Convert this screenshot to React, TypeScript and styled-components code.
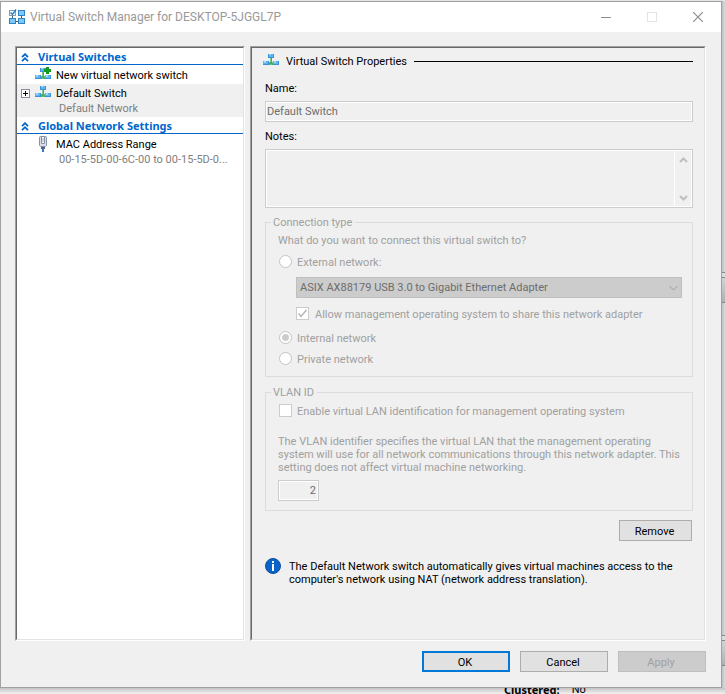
import React from "react";
import styled, { createGlobalStyle } from "styled-components";

const GlobalStyle = createGlobalStyle`
  * { box-sizing: border-box; }
  body {
    margin: 0;
    background: #f4f4f4;
    font-family: Roboto, "Noto Sans", sans-serif;
    font-size: 11px;
    line-height: 14px;
    color: #000;
  }
  button, input, select, textarea {
    font: inherit;
    margin: 0;
    border-radius: 0;
  }
`;

const Desktop = styled.div`
  display: grid;
  grid-template-columns: minmax(0, 1fr) 3px;
  grid-template-rows: minmax(0, 1fr) 6px;
  min-height: 100vh;
  padding-top: 1px;
  background: #e4e4e4;
`;

const Window = styled.main`
  display: flex;
  flex-direction: column;
  background: #f0f0f0;
  border: 1px solid #a0a0a0;
`;

const SideStrip = styled.div`
  display: flex;
  flex-direction: column;
  background: linear-gradient(to right, #bebebe, #dcdcdc);
`;

const Spacer = styled.div<{ $size?: number }>`
  flex: ${(p) => (p.$size === undefined ? "1" : `0 0 ${p.$size}px`)};
`;

const StripBar = styled.div`
  flex: 0 0 31px;
  border: 1px solid #85858c;
  border-width: 1px 0;
  background: linear-gradient(#dcdcdc 4px, #85858c 4px, #85858c 5px, #d2d2d2 5px, #b0b0b0);
`;

const BottomStrip = styled.div`
  grid-column: 1 / -1;
  display: flex;
  align-items: flex-end;
  gap: 12px;
  height: 6px;
  padding-left: 504px;
  overflow: hidden;
  line-height: 8px;
  background: linear-gradient(#c4c4c4, #f2f2f2);
`;

const StripName = styled.b`
  font-family: "Noto Sans", sans-serif;
`;

const TitleBar = styled.header`
  display: flex;
  align-items: center;
  height: 30px;
  padding-left: 8px;
  background: #fff;
  color: #999;
`;

const Title = styled.h1`
  flex: 1;
  margin: 0 0 0 5px;
  font-size: 12px;
  line-height: 16px;
  font-weight: 400;
  white-space: nowrap;
`;

const CaptionButton = styled.button`
  display: flex;
  align-items: center;
  justify-content: center;
  width: 46px;
  height: 30px;
  padding: 0;
  border: 0;
  background: none;
  color: #8c8c8c;
  &:disabled { color: #e4e4e4; }
`;

const Body = styled.div`
  flex: 1;
  display: grid;
  grid-template-columns: minmax(0, 230fr) minmax(0, 456fr);
  gap: 5px;
  padding: 14px 15px 10px 14px;
`;

const Sunken = styled.div`
  border: 1px solid;
  border-color: #a0a0a0 #fff #fff #a0a0a0;
  display: flex;
  min-width: 0;
`;

const SunkenInner = styled.div<{ $white?: boolean }>`
  flex: 1;
  min-width: 0;
  border: 1px solid;
  border-color: #696969 #e3e3e3 #e3e3e3 #696969;
  background: ${(p) => (p.$white ? "#fff" : "#f0f0f0")};
  padding: ${(p) => (p.$white ? "0" : "5px 11px 16px 13px")};
`;

const SectionHead = styled.h2`
  display: flex;
  align-items: center;
  gap: 9px;
  height: 17px;
  margin: 0 0 1px;
  padding: 2px 0 0 4px;
  border-bottom: 1px solid #0066cc;
  color: #0066cc;
  font-family: "Noto Sans", sans-serif;
  font-size: 11px;
  font-weight: 700;
`;

const TreeItem = styled.button<{ $selected?: boolean }>`
  display: grid;
  grid-template-columns: 16px 16px minmax(0, 1fr);
  column-gap: 2px;
  align-items: center;
  width: 100%;
  padding: 1px 4px 1px 0;
  border: 0;
  text-align: left;
  background: ${(p) => (p.$selected ? "#f0f0f0" : "none")};
`;

const Slot = styled.span`
  display: flex;
  justify-content: center;
  height: 16px;
  align-items: center;
`;

const ItemText = styled.span`
  padding: 2px 0 0 3px;
  white-space: nowrap;
`;

const ItemNote = styled.span`
  grid-column: 3;
  height: 15px;
  padding: 1px 0 0 6px;
  color: #808080;
  white-space: nowrap;
  overflow: hidden;
`;

const PanelHead = styled.div`
  display: flex;
  align-items: center;
  gap: 7px;
  height: 16px;
  margin: 0 0 12px -2px;
`;

const PanelTitle = styled.h2`
  margin: 0;
  padding-top: 2px;
  font-size: 11px;
  font-weight: 400;
`;

const Rule = styled.span`
  flex: 1;
  height: 1px;
  background: #000;
`;

const FieldLabel = styled.label`
  display: block;
  line-height: 16px;
  margin-bottom: 4px;
`;

const TextBox = styled.input`
  display: block;
  width: 100%;
  height: 21px;
  padding: 0 1px;
  border: 1px solid #ccc;
  box-shadow: inset 0 0 0 1px #fff;
  background: #f0f0f0;
  color: #6d6d6d;
  margin-bottom: 7px;
`;

const NumberBox = styled(TextBox)`
  width: 41px;
  padding-right: 2px;
  text-align: right;
  margin: 6px 0 0;
`;

const NotesFrame = styled.div`
  display: flex;
  height: 59px;
  border: 1px solid #ccc;
  padding: 1px;
  background: #fff;
  margin-bottom: 6px;
`;

const NotesArea = styled.textarea`
  flex: 1;
  min-width: 0;
  resize: none;
  border: 0;
  background: #f0f0f0;
`;

const ScrollTrack = styled.div`
  display: flex;
  flex-direction: column;
  justify-content: space-between;
  width: 16px;
  margin-left: 1px;
  background: #f0f0f0;
`;

const ScrollButton = styled.button`
  display: flex;
  align-items: center;
  justify-content: center;
  height: 17px;
  padding: 0;
  border: 0;
  background: none;
`;

const Group = styled.fieldset`
  margin: 0 0 7px;
  padding: 3px 10px 10px 12px;
  border: 1px solid #dcdcdc;
  min-width: 0;
  color: #a0a0a0;
`;

const VlanGroup = styled(Group)`
  margin-bottom: 9px;
  padding-top: 4px;
  padding-bottom: 9px;
`;

const GroupTitle = styled.legend`
  margin-left: -7px;
  padding: 2px 3px 0 2px;
`;

const Question = styled.p`
  margin: 0 0 6px;
  line-height: 16px;
`;

const Paragraph = styled.p`
  margin: 0;
  line-height: 13px;
`;

const Choice = styled.label<{ $gap: number; $indent?: boolean }>`
  display: flex;
  align-items: flex-start;
  gap: ${(p) => (p.$indent ? 6 : 5)}px;
  height: 14px;
  line-height: 16px;
  margin: 0 0 ${(p) => p.$gap}px ${(p) => (p.$indent ? 18 : 1)}px;
  white-space: nowrap;
`;

const Radio = styled.input.attrs({ type: "radio" })`
  appearance: none;
  flex: none;
  width: 13px;
  height: 13px;
  border: 1px solid #c4c4c4;
  border-radius: 50%;
  background: #fff;
  &:checked { background: radial-gradient(circle, #ccc 3px, #fff 4px); }
`;

const TickFrame = styled.span`
  display: grid;
  width: 13px;
  height: 13px;
  & > * { grid-area: 1 / 1; }
`;

const Tick = styled.input.attrs({ type: "checkbox" })`
  appearance: none;
  width: 13px;
  height: 13px;
  border: 1px solid #ccc;
  background: #fff;
`;

const SelectFrame = styled.div`
  display: grid;
  align-items: center;
  margin: 0 0 9px 18px;
  & > * { grid-area: 1 / 1; }
  & > svg { justify-self: end; margin-right: 4px; pointer-events: none; }
`;

const Select = styled.select`
  appearance: none;
  width: 100%;
  height: 21px;
  padding: 1px 20px 0 3px;
  border: 1px solid #bfbfbf;
  background: #ccc;
  color: #6d6d6d;
  opacity: 1;
`;

const Actions = styled.div`
  display: flex;
  justify-content: flex-end;
  padding-right: 1px;
`;

const PushButton = styled.button<{ $width: number; $primary?: boolean }>`
  width: ${(p) => p.$width}px;
  height: 21px;
  padding: 2px 2px 0 0;
  border: ${(p) => (p.$primary ? "2px solid #0078d7" : "1px solid #adadad")};
  background: #e1e1e1;
  color: #000;
  &:disabled { background: #ccc; border-color: #bfbfbf; color: #a0a0a0; }
`;

const InfoRow = styled.div`
  display: flex;
  gap: 8px;
  margin-top: 17px;
  & > svg { flex: none; }
`;

const InfoText = styled.p`
  margin: 2px 0 0;
  line-height: 13px;
`;

const Footer = styled.footer`
  display: flex;
  justify-content: flex-end;
  gap: 10px;
  padding: 0 15px 15px;
`;

function SwitchIcon({ plus }: { plus?: boolean }) {
  return (
    <svg width="16" height="16" viewBox="0 0 16 16" aria-hidden="true">
      <path d="M7 5h2v4l2 1v2H9l-1-.6-1 .6H5v-2l2-1z" fill="#45b058" />
      <path d="M7 5h1v4H7z" fill="#7cc884" />
      <rect x="5" y="1" width="6" height="4" fill="#3a92da" />
      <rect x="6" y="1" width="4" height="3" fill="#5fb4ee" />
      <rect x="6" y="1" width="2" height="1" fill="#9ad8fb" />
      <rect x="0" y="8" width="6" height="4" fill="#3a92da" />
      <rect x="0" y="8" width="5" height="3" fill="#5fb4ee" />
      <rect x="1" y="8" width="2" height="2" fill="#9ad8fb" />
      <rect x="10" y="8" width="6" height="4" fill="#3a92da" />
      <rect x="10" y="8" width="5" height="3" fill="#5fb4ee" />
      <rect x="11" y="8" width="2" height="2" fill="#9ad8fb" />
      {plus && <path d="M11 0h3v2h2v3h-2v2h-3V5H9V2h2z" fill="#119a1b" />}
    </svg>
  );
}

function AppIcon() {
  return (
    <svg width="16" height="16" viewBox="0 0 16 16" aria-hidden="true">
      <path d="M3.500 7v2M12.500 7v2M7 12.500h2" stroke="#4a5a68" />
      <rect x="0.500" y="1.500" width="6" height="5" fill="#fff" stroke="#8a9aa8" />
      <path d="M1.500 3.500l2 2L7 .5" fill="none" stroke="#1e7fcb" strokeWidth="1.400" />
      <rect x="9.500" y="1.500" width="6" height="5" fill="#7cc8f6" stroke="#2f82c4" />
      <rect x="0.500" y="9.500" width="6" height="5" fill="#7cc8f6" stroke="#2f82c4" />
      <rect x="9.500" y="9.500" width="6" height="5" fill="#7cc8f6" stroke="#2f82c4" />
    </svg>
  );
}

function PlugIcon() {
  return (
    <svg width="16" height="16" viewBox="0 0 16 16" aria-hidden="true">
      <path d="M4.500 1.500q0-1 1-1h5q1 0 1 1v8l-1 1h-5l-1-1z" fill="#d9dee8" stroke="#8791a5" />
      <path d="M6.500 1v6.500h3V1" fill="#f7f8fb" stroke="#8791a5" />
      <path d="M8 2v4" stroke="#aab2c2" />
      <rect x="6" y="11" width="4" height="2" fill="#4c5f86" />
      <rect x="7" y="13" width="2" height="3" fill="#3978b8" />
    </svg>
  );
}

function DoubleChevron() {
  return (
    <svg width="8" height="9" viewBox="0 0 8 9" aria-hidden="true">
      <path d="M1 4.200l3-3 3 3M1 8.200l3-3 3 3" fill="none" stroke="#0066cc" strokeWidth="1.800" />
    </svg>
  );
}

function ExpandIcon() {
  return (
    <svg width="9" height="9" viewBox="0 0 9 9" aria-hidden="true">
      <rect x="0.500" y="0.500" width="8" height="8" fill="#fff" stroke="#8c8caa" />
      <path d="M2 4.500h5M4.500 2v5" stroke="#000" />
    </svg>
  );
}

function Chevron({ up, thick }: { up?: boolean; thick?: boolean }) {
  return (
    <svg width="9" height="6" viewBox="0 0 9 6" aria-hidden="true">
      <path
        d={up ? "M1 5l3.500-3.500L8 5" : thick ? "M1 1l3.500 3.500L8 1" : "M.5 1l4 4 4-4"}
        fill="none"
        stroke={thick ? "#bfbfbf" : "#a0a0a0"}
        strokeWidth={thick ? 2 : 1}
      />
    </svg>
  );
}

function InfoIcon() {
  return (
    <svg width="16" height="16" viewBox="0 0 16 16" aria-hidden="true">
      <circle cx="8" cy="8" r="7.500" fill="#0a63c9" stroke="#0a4f9e" />
      <rect x="7" y="3" width="2" height="2" fill="#fff" />
      <rect x="7" y="6" width="2" height="7" fill="#fff" />
    </svg>
  );
}

export default function App() {
  return (
    <>
      <GlobalStyle />
      <Desktop>
        <Window>
          <TitleBar>
            <AppIcon />
            <Title>Virtual Switch Manager for DESKTOP-5JGGL7P</Title>
            <CaptionButton aria-label="Minimize">
              <svg width="10" height="10" viewBox="0 0 10 10"><path d="M0 5.500h10" stroke="currentColor" /></svg>
            </CaptionButton>
            <CaptionButton aria-label="Maximize" disabled>
              <svg width="10" height="10" viewBox="0 0 10 10"><rect x="0.500" y="0.500" width="9" height="9" fill="none" stroke="currentColor" /></svg>
            </CaptionButton>
            <CaptionButton aria-label="Close">
              <svg width="10" height="10" viewBox="0 0 10 10"><path d="M0 0l10 10M10 0L0 10" stroke="currentColor" strokeWidth="1.200" /></svg>
            </CaptionButton>
          </TitleBar>

          <Body>
            <Sunken as="nav">
              <SunkenInner $white>
                <SectionHead><DoubleChevron />Virtual Switches</SectionHead>
                <TreeItem>
                  <Slot />
                  <SwitchIcon plus />
                  <ItemText>New virtual network switch</ItemText>
                </TreeItem>
                <TreeItem $selected>
                  <Slot><ExpandIcon /></Slot>
                  <SwitchIcon />
                  <ItemText>Default Switch</ItemText>
                  <ItemNote>Default Network</ItemNote>
                </TreeItem>
                <SectionHead><DoubleChevron />Global Network Settings</SectionHead>
                <TreeItem>
                  <Slot />
                  <PlugIcon />
                  <ItemText>MAC Address Range</ItemText>
                  <ItemNote>00-15-5D-00-6C-00 to 00-15-5D-0...</ItemNote>
                </TreeItem>
              </SunkenInner>
            </Sunken>

            <Sunken as="section">
              <SunkenInner>
                <PanelHead>
                  <SwitchIcon />
                  <PanelTitle>Virtual Switch Properties</PanelTitle>
                  <Rule />
                </PanelHead>
                <FieldLabel htmlFor="name">Name:</FieldLabel>
                <TextBox id="name" defaultValue="Default Switch" disabled />
                <FieldLabel htmlFor="notes">Notes:</FieldLabel>
                <NotesFrame>
                  <NotesArea id="notes" disabled />
                  <ScrollTrack>
                    <ScrollButton aria-label="Scroll up" disabled><Chevron up thick /></ScrollButton>
                    <ScrollButton aria-label="Scroll down" disabled><Chevron thick /></ScrollButton>
                  </ScrollTrack>
                </NotesFrame>

                <Group disabled>
                  <GroupTitle>Connection type</GroupTitle>
                  <Question>What do you want to connect this virtual switch to?</Question>
                  <Choice $gap={8}>
                    <Radio name="connection" />External network:
                  </Choice>
                  <SelectFrame>
                    <Select aria-label="Network adapter">
                      <option>ASIX AX88179 USB 3.0 to Gigabit Ethernet Adapter</option>
                    </Select>
                    <Chevron />
                  </SelectFrame>
                  <Choice $gap={10} $indent>
                    <TickFrame>
                      <Tick defaultChecked />
                      <svg width="13" height="13" viewBox="0 0 13 13" aria-hidden="true">
                        <path d="M2.500 6.500l2.500 3 5.500-6.500" fill="none" stroke="#b4b4b4" strokeWidth="1.400" />
                      </svg>
                    </TickFrame>
                    Allow management operating system to share this network adapter
                  </Choice>
                  <Choice $gap={7}>
                    <Radio name="connection" defaultChecked />Internal network
                  </Choice>
                  <Choice $gap={0}>
                    <Radio name="connection" />Private network
                  </Choice>
                </Group>

                <VlanGroup disabled>
                  <GroupTitle>VLAN ID</GroupTitle>
                  <Choice $gap={17}>
                    <Tick />Enable virtual LAN identification for management operating system
                  </Choice>
                  <Paragraph>
                    The VLAN identifier specifies the virtual LAN that the management operating
                    system will use for all network communications through this network adapter. This
                    setting does not affect virtual machine networking.
                  </Paragraph>
                  <NumberBox aria-label="VLAN ID" defaultValue="2" />
                </VlanGroup>

                <Actions>
                  <PushButton $width={73}>Remove</PushButton>
                </Actions>
                <InfoRow>
                  <InfoIcon />
                  <InfoText>
                    The Default Network switch automatically gives virtual machines access to the
                    computer's network using NAT (network address translation).
                  </InfoText>
                </InfoRow>
              </SunkenInner>
            </Sunken>
          </Body>

          <Footer>
            <PushButton $width={88} $primary>OK</PushButton>
            <PushButton $width={88}>Cancel</PushButton>
            <PushButton $width={88} disabled>Apply</PushButton>
          </Footer>
        </Window>
        <SideStrip>
          <Spacer $size={271} />
          <StripBar />
          <Spacer />
          <StripBar />
          <Spacer $size={22} />
        </SideStrip>
        <BottomStrip>
          <StripName>Clustered:</StripName>
          <span>No</span>
        </BottomStrip>
      </Desktop>
    </>
  );
}
